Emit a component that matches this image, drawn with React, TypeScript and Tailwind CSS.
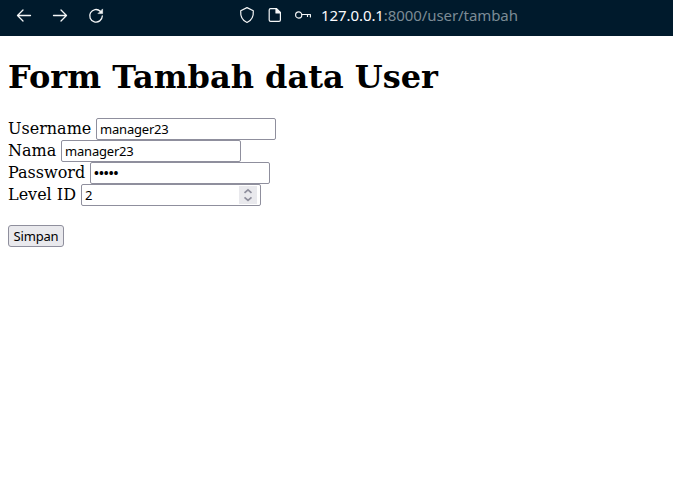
import { useState } from "react";

type FieldProps = {
  label: string;
  labelClass: string;
  type?: string;
  initial: string;
  inputClass?: string;
  stepper?: boolean;
};

function Field({ label, labelClass, type = "text", initial, inputClass = "", stepper = false }: FieldProps) {
  const [value, setValue] = useState(initial);
  return (
    <label className="flex h-[22px] items-start">
      <span className={`shrink-0 whitespace-nowrap leading-[21px] ${labelClass}`}>{label}</span>
      <span className="flex h-[22px] w-[180px] items-center rounded-[2px] border border-[#8f8f9d] bg-white pr-[3px] pl-[3px]">
        <input
          type={type}
          value={value}
          onChange={(e) => setValue(e.target.value)}
          className={`h-[18px] w-full min-w-0 bg-transparent p-0 font-['Noto_Sans','Open_Sans',sans-serif] text-[13px] leading-[18px] text-black outline-none ${inputClass}`}
        />
        {stepper && (
          <span className="flex h-[18px] w-[18px] shrink-0 items-center justify-center bg-[#e9e9ed]">
            <svg width="18" height="18" viewBox="0 0 18 18" fill="none" stroke="#8f8f9d" strokeWidth="1.7">
              <path d="M5.500 6.900 9 3.800l3.500 3.100M5.500 11.300 9 14.400l3.500-3.100" />
            </svg>
          </span>
        )}
      </span>
    </label>
  );
}

function BrowserBar() {
  return (
    <header className="flex h-9 items-start bg-[#001a2c] pt-2 text-[#f4f6f7]">
      <svg className="ml-4 shrink-0" width="16" height="16" viewBox="0 0 16 16" fill="none" stroke="currentColor" strokeWidth="1.3" strokeLinecap="round" strokeLinejoin="round">
        <path d="M14.5 7.5h-13M7 2 1.5 7.5 7 13" />
      </svg>
      <svg className="ml-5 shrink-0" width="16" height="16" viewBox="0 0 16 16" fill="none" stroke="currentColor" strokeWidth="1.3" strokeLinecap="round" strokeLinejoin="round">
        <path d="M1.5 7.5h13M9 2l5.5 5.5L9 13" />
      </svg>
      <svg className="ml-5 shrink-0" width="16" height="16" viewBox="0 0 16 16" fill="none" stroke="currentColor" strokeWidth="1.3" strokeLinecap="round">
        <path d="M12.3 3.2A6.3 6.3 0 1 0 14.3 8" />
        <path d="M14.6 1.3v4.300h-4.300z" fill="currentColor" stroke="currentColor" strokeWidth=".6" strokeLinejoin="round" />
      </svg>
      <svg className="ml-[135px] shrink-0 overflow-visible" width="16" height="16" viewBox="0 0 16 16" fill="none" stroke="currentColor" strokeWidth="1.2" strokeLinejoin="round">
        <path d="M8-.4 14.3 2.700C14.700 8 12.500 12.500 8 14.500 3.500 12.500 1.300 8 1.700 2.700Z" />
      </svg>
      <svg className="ml-3 shrink-0" width="16" height="16" viewBox="0 0 16 16" fill="none" stroke="currentColor" strokeWidth="1.2" strokeLinejoin="round">
        <path d="M3.600.6h6l3.800 3.800v7.600q0 1.400-1.400 1.400H3.600q-1.400 0-1.400-1.400V2q0-1.400 1.400-1.400Z" />
        <path d="M9 .6v4.400h4.400z" fill="currentColor" />
      </svg>
      <svg className="ml-3 shrink-0" width="17" height="16" viewBox="0 0 17 16" fill="none" stroke="currentColor" strokeWidth="1.2" strokeLinecap="round">
        <circle cx="3.700" cy="7" r="3.100" />
        <path d="M6.900 6.500h8.500M15.400 6.600v2.400M12.500 6.600v1.800" />
      </svg>
      <div className="ml-[9px] -mt-[3px] whitespace-nowrap font-['Noto_Sans','Open_Sans',sans-serif] text-[15px] leading-5 tracking-[-0.08px] text-[#fbfbfe]">
        <span>127.0.0.1</span>
        <span className="text-[#7c8b95]">:8000/user/tambah</span>
      </div>
    </header>
  );
}

export default function App() {
  return (
    <div className="min-h-screen bg-white font-['DejaVu_Serif',serif] text-base text-black">
      <BrowserBar />
      <main className="px-2 pt-[22px]">
        <h1 className="text-[32px] leading-[38px] font-bold whitespace-nowrap">Form Tambah data User</h1>
        <form className="pt-[22px]" onSubmit={(e) => e.preventDefault()}>
          <Field label="Username" labelClass="w-[88px]" initial="manager23" inputClass="tracking-[-0.2px]" />
          <Field label="Nama" labelClass="w-[53px]" initial="manager23" inputClass="tracking-[-0.2px]" />
          <Field label="Password" labelClass="w-[82px]" type="password" initial="12345" inputClass="font-bold" />
          <Field label="Level ID" labelClass="w-[73px]" initial="2" stepper />
          <button
            type="submit"
            className="mt-[19px] flex h-[22px] w-[56px] items-center justify-center rounded-[3px] border border-[#8f8f9d] bg-[#e9e9ed] font-['Noto_Sans','Open_Sans',sans-serif] text-[13px] leading-[18px] tracking-[-0.2px]"
          >
            Simpan
          </button>
        </form>
      </main>
    </div>
  );
}
